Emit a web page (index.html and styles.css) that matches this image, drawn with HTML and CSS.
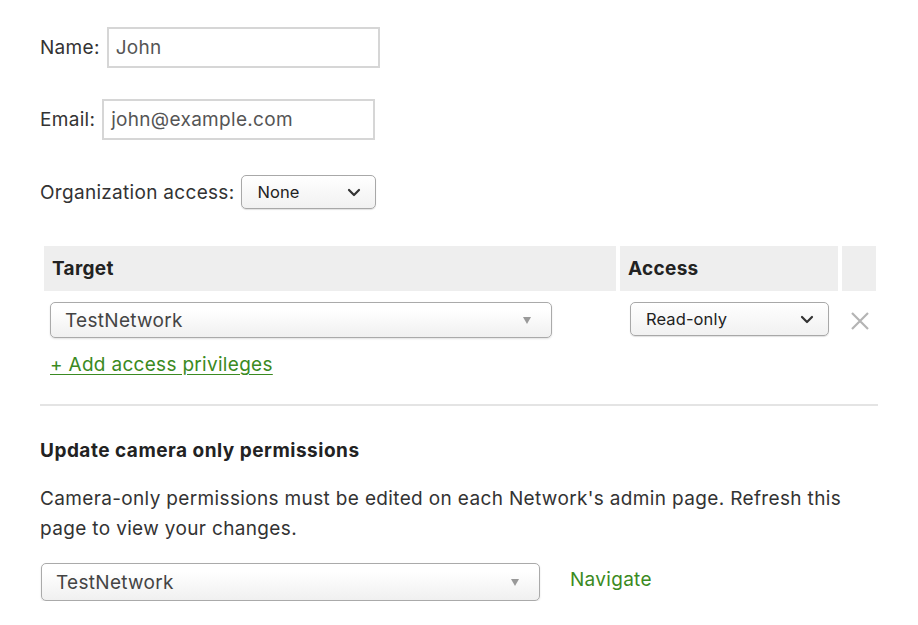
FILE: index.html
```html
<!DOCTYPE html>
<html>
<head>
<meta charset="utf-8">
<link rel="stylesheet" href="styles.css">
</head>
<body>
<div class="page">
  <div class="field field-name">
    <label class="label">Name:</label>
    <div class="input">John</div>
  </div>
  <div class="field field-email">
    <label class="label">Email:</label>
    <div class="input">john@example.com</div>
  </div>
  <div class="field field-org">
    <label class="label">Organization access:</label>
    <div class="select select-org">
      <span>None</span>
      <svg class="chev" width="14" height="9" viewBox="0 0 14 9"><path d="M2 2 L7 7 L12 2" fill="none" stroke="#333" stroke-width="2.2" stroke-linecap="round" stroke-linejoin="round"/></svg>
    </div>
  </div>

  <table class="priv">
    <thead>
      <tr><th class="c-target">Target</th><th class="c-access">Access</th><th class="c-x"></th></tr>
    </thead>
    <tbody>
      <tr>
        <td class="c-target">
          <div class="chosen chosen-row"><span>TestNetwork</span><span class="tri"></span></div>
        </td>
        <td class="c-access">
          <div class="select select-access">
            <span>Read-only</span>
            <svg class="chev" width="14" height="9" viewBox="0 0 14 9"><path d="M2 2 L7 7 L12 2" fill="none" stroke="#333" stroke-width="2.2" stroke-linecap="round" stroke-linejoin="round"/></svg>
          </div>
        </td>
        <td class="c-x">
          <svg class="xicon" width="20" height="20" viewBox="0 0 20 20"><path d="M2 2 L18 18 M18 2 L2 18" stroke="#b4b4b4" stroke-width="2.2" fill="none"/></svg>
        </td>
      </tr>
    </tbody>
  </table>
  <a class="add-link" href="#">+ Add access privileges</a>

  <hr class="divider">

  <h3 class="section-title">Update camera only permissions</h3>
  <p class="desc">Camera-only permissions must be edited on each Network's admin page. Refresh this page to view your changes.</p>

  <div class="nav-row">
    <div class="chosen chosen-nav"><span>TestNetwork</span><span class="tri"></span></div>
    <a class="nav-link" href="#">Navigate</a>
  </div>
</div>
</body>
</html>
```

FILE: styles.css
```css
* { box-sizing: border-box; }
html, body { margin: 0; padding: 0; background: #fff; }
body {
  font-family: Inter, "Noto Sans", "Liberation Sans", sans-serif;
  color: #333;
  font-size: 19px;
  letter-spacing: 0.3px;
}
.page {
  padding: 27px 40px 0 40px;
  width: 918px;
}
.field {
  display: flex;
  align-items: center;
}
.label {
  font-size: 19px;
  color: #333;
  margin-right: 7px;
}
.input {
  width: 273px;
  height: 41px;
  border: 2px solid #d6d6d6;
  padding: 0 7px;
  display: flex;
  align-items: center;
  color: #555;
  font-size: 19px;
}
.field-email { margin-top: 31px; }
.field-email .label { margin-right: 7px; }
.field-org { margin-top: 35px; }
.field-org .label { margin-right: 7px; }

.select {
  height: 34px;
  border: 1px solid #a8a8a8;
  border-radius: 5px;
  background: linear-gradient(#ffffff, #f1f1f1);
  box-shadow: 0 1px 1px rgba(0,0,0,0.12);
  display: flex;
  align-items: center;
  justify-content: space-between;
  padding: 0 14px 0 15px;
  font-size: 16.5px;
  letter-spacing: 0.1px;
  color: #222;
}
.select-org { width: 135px; }
.select-access { width: 199px; }
.chev { display: block; }

.priv {
  margin-top: 37px;
  margin-left: 0;
  border-collapse: separate;
  border-spacing: 4px 0;
  width: 840px;
}
.priv th {
  background: #eeeeee;
  height: 45px;
  text-align: left;
  font-weight: 700;
  font-size: 19px;
  color: #222;
  padding: 0 8px;
}
.priv th.c-target { width: 572px; }
.priv th.c-access { width: 218px; }
.priv td {
  padding: 11px 0 0 0;
  vertical-align: top;
}
.priv td.c-target { padding-left: 6px; }
.priv td.c-access { padding-left: 10px; }
.priv td.c-x { padding-left: 8px; padding-top: 20px; }
.xicon { display: block; }

.chosen {
  height: 36px;
  border: 1px solid #aaa;
  border-radius: 5px;
  background: linear-gradient(#ffffff 20%, #f0f0f0 100%);
  box-shadow: 0 1px 2px rgba(0,0,0,0.12);
  display: flex;
  align-items: center;
  justify-content: space-between;
  padding: 0 20px 0 14px;
  font-size: 19px;
  color: #444;
}
.chosen-row { width: 502px; }
.tri {
  width: 0; height: 0;
  border-left: 4px solid transparent;
  border-right: 4px solid transparent;
  border-top: 7px solid #999;
}

.add-link {
  display: inline-block;
  margin-top: 15px;
  margin-left: 10px;
  color: #3b8a22;
  font-size: 19px;
  text-decoration: underline;
  text-underline-offset: 3px;
}

.divider {
  border: 0;
  border-top: 2px solid #e4e4e4;
  margin: 28px 0 0 0;
  width: 838px;
}

.section-title {
  margin: 33px 0 0 0;
  font-size: 19px;
  font-weight: 700;
  letter-spacing: 0.5px;
  color: #222;
}
.desc {
  margin: 22px 0 0 0;
  font-size: 19px;
  line-height: 30px;
  letter-spacing: 0.35px;
  color: #333;
  width: 838px;
}

.nav-row {
  display: flex;
  align-items: center;
  margin-top: 19px;
}
.chosen-nav { width: 499px; height: 38px; margin-left: 1px; }
.nav-link {
  color: #3b8a22;
  text-decoration: none;
  font-size: 19px;
  margin-left: 30px;
  margin-top: -6px;
}
```
